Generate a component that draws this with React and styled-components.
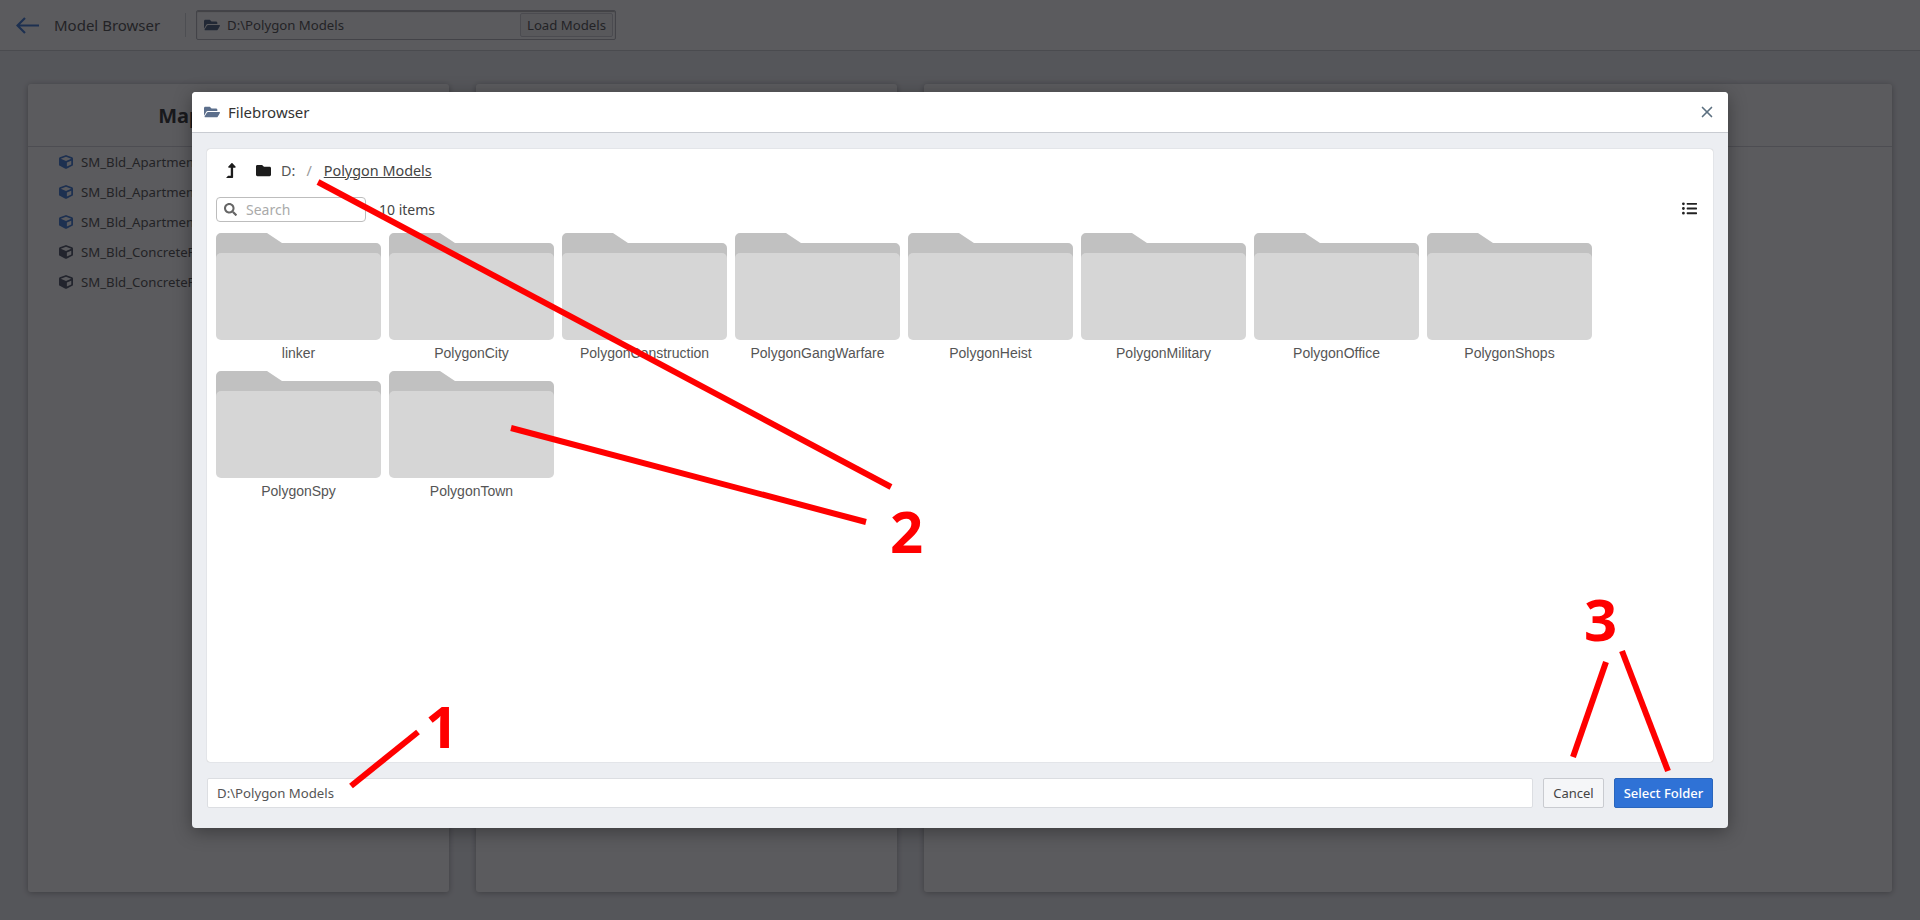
import React from 'react';
import styled, { createGlobalStyle } from 'styled-components';
import { FaFolderOpen, FaFolder, FaLevelUpAlt, FaSearch, FaListUl, FaCube } from 'react-icons/fa';
import { X } from 'lucide-react';

const Global = createGlobalStyle`
  html, body { margin: 0; padding: 0; height: 100%; overflow: hidden; }
  body { font-family: "Noto Sans", "Open Sans", sans-serif; font-size: 14px; color: #333; background: #eceef2; }
  #root { height: 100%; }
`;

const Page = styled.div`
  position: relative;
  width: 1920px;
  height: 920px;
  display: flex;
  flex-direction: column;
  overflow: hidden;
`;

const TopBar = styled.header`
  height: 50px;
  flex: none;
  background: #fff;
  border-bottom: 1px solid #c6c8cc;
  display: flex;
  align-items: center;
  padding-left: 16px;
  box-sizing: content-box;
`;

const BackArrow = styled.svg`
  width: 23px;
  height: 17px;
  margin-right: 15px;
  flex: none;
`;

const PageTitle = styled.div`
  font-size: 15px;
  width: 106px;
  white-space: nowrap;
  color: #444;
`;

const Divider = styled.div`
  width: 1px;
  height: 24px;
  margin: 0 10px 0 25px;
  background: #d0d2d6;
`;

const PathGroup = styled.div`
  width: 420px;
  height: 30px;
  box-sizing: border-box;
  display: flex;
  align-items: center;
  padding: 0 2px 0 7px;
  background: #fff;
  border: 1px solid #aeb0b6;
  box-shadow: inset 0 1px 1px rgba(0, 0, 0, 0.35);
  border-radius: 2px;
  font-size: 13.2px;
  color: #444;
`;

const PathIcon = styled(FaFolderOpen)`
  width: 16px;
  height: 16px;
  color: #3f5577;
  margin-right: 7px;
  flex: none;
`;

const PathText = styled.span`
  flex: 1;
  white-space: nowrap;
`;

const LoadButton = styled.button`
  width: 93px;
  height: 24px;
  padding: 0;
  font: inherit;
  color: #444;
  background: #f3f4f6;
  border: 1px solid #c8cad0;
  border-radius: 2px;
`;

const Columns = styled.main`
  flex: 1;
  display: flex;
  gap: 27px;
  padding: 33px 28px 28px;
  min-height: 0;
`;

const Card = styled.section`
  flex: ${p => p.$grow || '0 0 421px'};
  background: #fff;
  border-radius: 3px;
  box-shadow: 0 1px 6px rgba(0, 0, 0, 0.35);
`;

const CardHead = styled.div`
  height: 62px;
  display: flex;
  align-items: center;
  justify-content: center;
  border-bottom: 1px solid #cfd1d5;
  font-size: 20px;
  font-weight: 700;
  color: #222;
`;

const AssetList = styled.ul`
  list-style: none;
  margin: 0;
  padding: 0 0 0 31px;
`;

const AssetRow = styled.li`
  height: 30px;
  display: flex;
  align-items: center;
  gap: 8px;
  font-size: 13.2px;
  color: #444;
  white-space: nowrap;
  svg { width: 14px; height: 16px; color: ${p => (p.$blue ? '#2f6fd0' : '#40485a')}; flex: none; }
`;

const Overlay = styled.div`
  position: absolute;
  inset: 0;
  display: flex;
  align-items: center;
  justify-content: center;
  background: rgba(21, 22, 25, 0.7);
`;

const Dialog = styled.div`
  width: 80%;
  height: 80%;
  display: flex;
  flex-direction: column;
  background: #eceef2;
  border-radius: 4px;
  box-shadow: 0 4px 18px rgba(0, 0, 0, 0.35);
  overflow: hidden;
`;

const DialogHead = styled.div`
  height: 41px;
  flex: none;
  box-sizing: border-box;
  display: flex;
  align-items: center;
  padding: 0 12px 0 12px;
  background: #fff;
  border-bottom: 1px solid #c9ccd2;
`;

const DialogIcon = styled(FaFolderOpen)`
  width: 16px;
  height: 16px;
  color: #5c6f8c;
  margin-right: 8px;
`;

const DialogTitle = styled.div`
  flex: 1;
  font-size: 15px;
  font-weight: 400;
  color: #333;
`;

const CloseIcon = styled(X)`
  width: 18px;
  height: 18px;
  color: #5c7080;
`;

const DialogBody = styled.div`
  flex: 1;
  min-height: 0;
  display: flex;
  flex-direction: column;
  gap: 16px;
  padding: 16px 15px 20px;
`;

const BrowserPanel = styled.div`
  flex: 1;
  min-height: 0;
  background: #fff;
  border-radius: 3px;
  box-shadow: 0 0 1px rgba(0, 0, 0, 0.35);
  padding: 0 9px;
`;

const Crumbs = styled.div`
  height: 42px;
  margin-bottom: 6px;
  display: flex;
  align-items: center;
  padding-left: 8px;
  color: #555;
  font-size: 14.4px;
  svg { flex: none; color: #1c1c1c; }
`;

const UpIcon = styled(FaLevelUpAlt)`
  width: 14px;
  height: 15px;
  margin-right: 18px;
`;

const CrumbFolder = styled(FaFolder)`
  width: 15px;
  height: 15px;
  margin-right: 10px;
`;

const CrumbSep = styled.span`
  margin: 0 12px 0 11px;
  color: #999;
`;

const CrumbLink = styled.span`
  text-decoration: underline;
  color: #444;
`;

const Tools = styled.div`
  height: 25px;
  display: flex;
  align-items: center;
  margin-bottom: 11px;
`;

const SearchBox = styled.div`
  width: 150px;
  height: 25px;
  box-sizing: border-box;
  display: flex;
  align-items: center;
  gap: 9px;
  padding-left: 7px;
  border: 1px solid #bdbdbd;
  border-radius: 4px;
  color: #aaa;
  font-size: 14px;
  svg { width: 13px; height: 13px; color: #666; }
`;

const Count = styled.span`
  margin-left: 13px;
  flex: 1;
  font-size: 14px;
  color: #444;
`;

const ListIcon = styled(FaListUl)`
  width: 15px;
  height: 15px;
  color: #222;
  margin: 0 7px 2px 0;
`;

const Grid = styled.div`
  display: flex;
  flex-wrap: wrap;
  gap: 0 8px;
`;

const Folder = styled.div`
  width: 165px;
  height: 138px;
  text-align: center;
  font-family: "Liberation Sans", Arial, sans-serif;
  font-size: 14px;
  color: #555;
  svg { display: block; margin-bottom: 5px; }
`;

const Footer = styled.div`
  height: 30px;
  flex: none;
  display: flex;
  gap: 10px;
`;

const PathField = styled.div`
  flex: 1;
  box-sizing: border-box;
  display: flex;
  align-items: center;
  padding-left: 9px;
  background: #fff;
  border: 1px solid #dcdee2;
  border-radius: 2px;
  font-size: 13.2px;
  color: #555;
`;

const FootButton = styled.button`
  height: 30px;
  width: ${p => p.$w}px;
  padding: 0;
  font: inherit;
  font-size: 13px;
  border-radius: 2px;
  border: 1px solid ${p => (p.$primary ? '#2a66bd' : '#c9cbd0')};
  background: ${p => (p.$primary ? '#2f72d6' : '#f5f6f8')};
  color: ${p => (p.$primary ? '#fff' : '#444')};
  font-weight: ${p => (p.$primary ? 500 : 400)};
`;

const Marks = styled.svg`
  position: absolute;
  inset: 0;
  width: 1920px;
  height: 920px;
  pointer-events: none;
`;

const Digit = styled.span`
  position: absolute;
  left: ${p => p.$x}px;
  top: ${p => p.$y}px;
  font-family: "Open Sans", sans-serif;
  font-size: 58px;
  line-height: 58px;
  font-weight: 700;
  color: #f00;
`;

const FolderArt = () => (
  <svg width="165" height="107" viewBox="0 0 165 107">
    <path d="M5 0H51L66 10H160a5 5 0 0 1 5 5V40H0V5a5 5 0 0 1 5-5z" fill="#c1c1c1" />
    <path d="M5 20H160a5 5 0 0 1 5 5V102a5 5 0 0 1-5 5H5a5 5 0 0 1-5-5V25a5 5 0 0 1 5-5z" fill="#d6d6d6" />
  </svg>
);

const folders = ['linker', 'PolygonCity', 'PolygonConstruction', 'PolygonGangWarfare', 'PolygonHeist', 'PolygonMilitary', 'PolygonOffice', 'PolygonShops', 'PolygonSpy', 'PolygonTown'];
const assets = [['SM_Bld_Apartment_01', 1], ['SM_Bld_Apartment_02', 1], ['SM_Bld_Apartment_03', 1], ['SM_Bld_ConcreteFence_01', 0], ['SM_Bld_ConcreteFence_02', 0]];
const lines = [
  [318, 182, 891, 487],
  [511, 428, 866, 522],
  [351, 786, 418, 732],
  [1606, 662, 1573, 757],
  [1622, 651, 1668, 771],
];

export default function App() {
  return (
    <Page>
      <Global />
      <TopBar>
        <BackArrow viewBox="0 0 23 17" fill="none" stroke="#2f6fd0" strokeWidth="2.2">
          <path d="M1.5 8.5H23M9 1L1.5 8.5L9 16" />
        </BackArrow>
        <PageTitle>Model Browser</PageTitle>
        <Divider />
        <PathGroup>
          <PathIcon />
          <PathText>D:\Polygon Models</PathText>
          <LoadButton>Load Models</LoadButton>
        </PathGroup>
      </TopBar>
      <Columns>
        <Card>
          <CardHead>Map Model Files</CardHead>
          <AssetList>
            {assets.map(([name, blue]) => (
              <AssetRow key={name} $blue={blue}><FaCube />{name}</AssetRow>
            ))}
          </AssetList>
        </Card>
        <Card><CardHead /></Card>
        <Card $grow="1"><CardHead /></Card>
      </Columns>
      <Overlay>
        <Dialog>
          <DialogHead>
            <DialogIcon />
            <DialogTitle>Filebrowser</DialogTitle>
            <CloseIcon strokeWidth={2.2} />
          </DialogHead>
          <DialogBody>
            <BrowserPanel>
              <Crumbs>
                <UpIcon />
                <CrumbFolder />
                <span>D:</span>
                <CrumbSep>/</CrumbSep>
                <CrumbLink>Polygon Models</CrumbLink>
              </Crumbs>
              <Tools>
                <SearchBox><FaSearch />Search</SearchBox>
                <Count>10 items</Count>
                <ListIcon />
              </Tools>
              <Grid>
                {folders.map(f => (
                  <Folder key={f}><FolderArt />{f}</Folder>
                ))}
              </Grid>
            </BrowserPanel>
            <Footer>
              <PathField>D:\Polygon Models</PathField>
              <FootButton $w={61}>Cancel</FootButton>
              <FootButton $w={99} $primary>Select Folder</FootButton>
            </Footer>
          </DialogBody>
        </Dialog>
      </Overlay>
      <Marks viewBox="0 0 1920 920">
        {lines.map(([x1, y1, x2, y2]) => (
          <line key={x1} x1={x1} y1={y1} x2={x2} y2={y2} stroke="#f00" strokeWidth="6" />
        ))}
      </Marks>
      <Digit $x={425} $y={697}>1</Digit>
      <Digit $x={890} $y={502}>2</Digit>
      <Digit $x={1584} $y={590}>3</Digit>
    </Page>
  );
}
